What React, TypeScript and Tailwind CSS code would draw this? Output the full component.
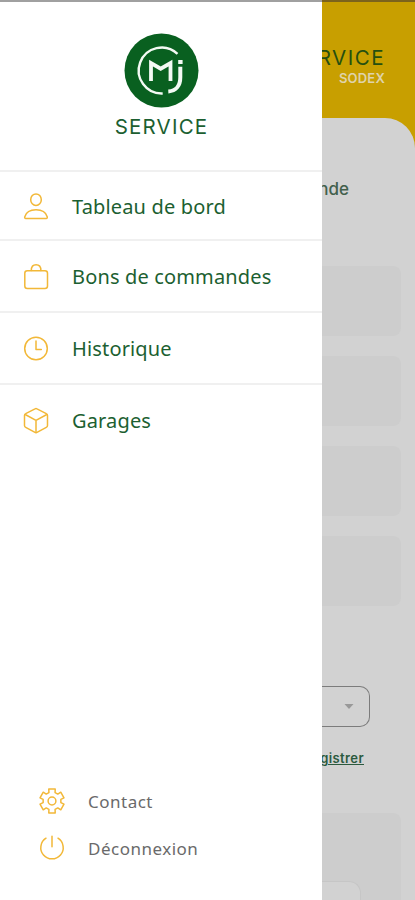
import type { ReactNode } from "react";

const iconClass = "h-[26px] w-[26px] shrink-0 overflow-visible";

const iconProps = {
  viewBox: "0 0 26 26",
  fill: "none",
  stroke: "#f2b838",
  strokeWidth: 1.5,
  strokeLinecap: "round",
  strokeLinejoin: "round",
  className: iconClass,
} as const;

const UserIcon = () => (
  <svg {...iconProps}>
    <ellipse cx="12" cy="5.700" rx="5.300" ry="5.800" />
    <path d="M1.800 24.500c-1 0-1.300-.8-1-1.800 1.200-4.200 5.500-7 11.200-7s10 2.800 11.200 7c.3 1 0 1.800-1 1.800z" />
  </svg>
);

const BagIcon = () => (
  <svg {...iconProps}>
    <rect x=".8" y="6.700" width="22.700" height="17.800" rx="2.500" />
    <path d="M7.300 6.500c0-3.200 1.600-5.700 4.800-5.700s4.800 2.500 4.800 5.700" />
  </svg>
);

const ClockIcon = () => (
  <svg {...iconProps}>
    <circle cx="12" cy="12.500" r="11.300" />
    <path d="M12 5v8.500h5.300" />
  </svg>
);

const BoxIcon = () => (
  <svg {...iconProps}>
    <path d="M11 .9a2 2 0 0 1 2 0l9.300 4.700a2 2 0 0 1 1.200 1.800v10.200a2 2 0 0 1-1.200 1.800l-9.300 5a2 2 0 0 1-2 0l-9.300-5A2 2 0 0 1 .5 17.600V7.400a2 2 0 0 1 1.200-1.800z" />
    <path d="m1.200 6.500 10.800 5.900 10.800-5.900M12 12.400v12" />
  </svg>
);

// six teeth, each one rising from the inner radius to the outer one
const gearPoints = [0, 60, 120, 180, 240, 300]
  .flatMap((angle) => [
    [angle - 20, 9],
    [angle - 15, 12.4],
    [angle + 15, 12.4],
    [angle + 20, 9],
  ])
  .map(([angle, radius]) => {
    const rad = (angle * Math.PI) / 180;
    return `${13 + radius * Math.sin(rad)},${13 - radius * Math.cos(rad)}`;
  })
  .join(" ");

const GearIcon = () => (
  <svg {...iconProps}>
    <polygon points={gearPoints} />
    <circle cx="13" cy="13" r="3.900" />
  </svg>
);

const PowerIcon = () => (
  <svg {...iconProps}>
    <path d="M7 3.200a11.200 11.200 0 1 0 12 0M13 1.300v10.500" />
  </svg>
);

const Logo = () => (
  <svg viewBox="0 0 75 75" fill="none" className="h-[75px] w-[75px]">
    <circle cx="37.500" cy="37.500" r="37" fill="#096020" />
    <g stroke="#f4faf4">
      <path d="M53.500 20.800A23 23 0 1 0 38.700 60.500" strokeWidth="2.400" />
      <path d="M27 48V30l9.700 5.700L46.500 30v18" strokeWidth="3.800" />
      <path d="M56.300 33.700v10.500c0 8.500-4.300 13.800-12 14.200" strokeWidth="4" />
      <path d="M54.200 29h4.400" strokeWidth="4" />
    </g>
  </svg>
);

type ItemProps = { icon: ReactNode; label: string };

const MenuItem = ({ icon, label }: ItemProps) => (
  <a className="flex h-[72px] items-center gap-[22px] border-t-2 border-[#f0f0f0] pt-[2px] pl-6 first:h-[69px]">
    {icon}
    <span className="font-['Noto_Sans',sans-serif] text-[20px] tracking-[0.15px] text-[#1c5f31]">
      {label}
    </span>
  </a>
);

const FooterItem = ({ icon, label }: ItemProps) => (
  <a className="flex h-[47px] items-center gap-[23px]">
    {icon}
    <span className="pt-[2px] font-['Noto_Sans',sans-serif] text-[17px] tracking-[0.5px] text-[#6a6a6a]">
      {label}
    </span>
  </a>
);

const Sidebar = () => (
  <aside className="flex w-[322px] shrink-0 flex-col bg-white">
    <div className="flex h-[168px] flex-col items-center pt-[31px]">
      <Logo />
      <span className="mt-[4px] pl-px font-[Inter,sans-serif] text-[20.500px] leading-[30px] tracking-[1.200px] text-[#1c5f31]">
        SERVICE
      </span>
    </div>
    <nav>
      <MenuItem icon={<UserIcon />} label="Tableau de bord" />
      <MenuItem icon={<BagIcon />} label="Bons de commandes" />
      <MenuItem icon={<ClockIcon />} label="Historique" />
      <MenuItem icon={<BoxIcon />} label="Garages" />
    </nav>
    <div className="mt-auto pb-[29px] pl-[39px]">
      <FooterItem icon={<GearIcon />} label="Contact" />
      <FooterItem icon={<PowerIcon />} label="Déconnexion" />
    </div>
  </aside>
);

const Page = () => (
  <main className="flex min-w-0 flex-1 flex-col overflow-hidden bg-[#c89f00] font-[Inter,sans-serif]">
    <header className="flex h-[116px] shrink-0 flex-col items-end pt-[41px] pr-[30px]">
      <span className="text-[20.500px] leading-[30px] tracking-[1.500px] text-[#264f10]">
        SERVICE
      </span>
      <span className="text-[13px] leading-[11px] font-semibold tracking-[0.2px] text-[#dfd3aa]">
        SODEX
      </span>
    </header>
    <section className="flex flex-1 flex-col rounded-tr-[30px] bg-[#d2d2d2]">
      <div className="flex justify-end pt-[60px] pr-[66px]">
        <span className="text-[17px] leading-[22px] font-medium text-[#42604c]">Commande</span>
      </div>
      <div className="mt-[66px] flex flex-col gap-5 pr-[14px]">
        <div className="h-[70px] rounded-r-lg bg-[#cdcdcd]" />
        <div className="h-[70px] rounded-r-lg bg-[#cdcdcd]" />
        <div className="h-[70px] rounded-r-lg bg-[#cdcdcd]" />
        <div className="h-[70px] rounded-r-lg bg-[#cdcdcd]" />
      </div>
      <div className="mt-[80px] mr-[45px] flex h-[41px] items-center justify-end rounded-r-[10px] border border-l-0 border-[#7c7c7c] pr-[15px]">
        <svg viewBox="0 0 10 6" className="h-[6px] w-[10px]">
          <path d="M.5 0h9L5 5z" fill="#999" />
        </svg>
      </div>
      <div className="mt-[21px] flex justify-end pr-[51px]">
        <span className="text-[13px] leading-[20px] font-semibold tracking-[0.400px] text-[#2b5a3e] underline">
          Enregistrer
        </span>
      </div>
      <div className="mt-[45px] mr-[14px] flex flex-1 flex-col rounded-tr-lg bg-[#cdcdcd] pt-[68px] pr-[40px]">
        <div className="flex-1 rounded-tr-[12px] border-t border-r border-[#c6c6c6] bg-[#d2d2d2]" />
      </div>
    </section>
  </main>
);

export default function App() {
  return (
    <div className="flex h-[900px] w-[415px] flex-col overflow-hidden bg-white">
      <div className="flex h-[2px] shrink-0">
        <div className="w-[322px] bg-[#a0a0a0]" />
        <div className="flex-1 bg-[#7c631c]" />
      </div>
      <div className="flex min-h-0 flex-1">
        <Sidebar />
        <Page />
      </div>
    </div>
  );
}
